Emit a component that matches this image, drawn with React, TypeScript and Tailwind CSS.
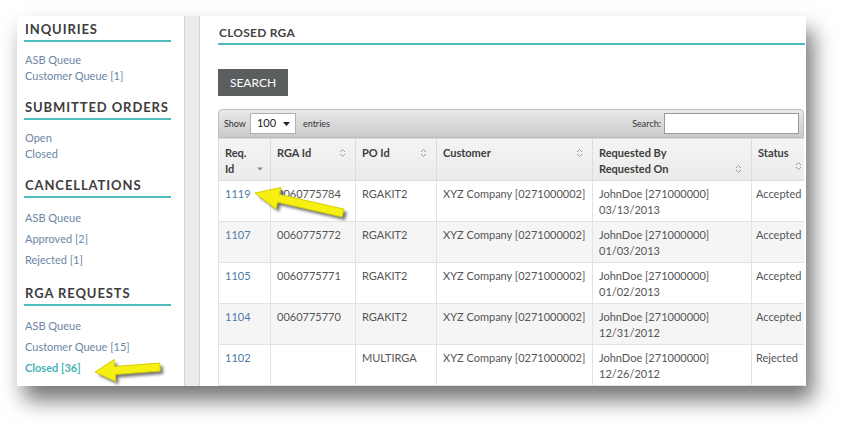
import React from 'react';

// Closed RGA list – screenshot of an admin page with callout arrows
const menu = [
  { title: 'INQUIRIES', gap: 'mt-[10px] gap-0', items: [{ label: 'ASB Queue' }, { label: 'Customer Queue [1]' }] },
  { title: 'SUBMITTED ORDERS', gap: 'mt-[10px] gap-0', items: [{ label: 'Open' }, { label: 'Closed' }] },
  {
    title: 'CANCELLATIONS',
    gap: 'mt-[12px] gap-[5px]',
    items: [{ label: 'ASB Queue' }, { label: 'Approved [2]' }, { label: 'Rejected [1]' }]
  },
  {
    title: 'RGA REQUESTS',
    gap: 'mt-[12px] gap-[5px]',
    items: [{ label: 'ASB Queue' }, { label: 'Customer Queue [15]' }, { label: 'Closed [36]', active: true }]
  }
];

const rows = [
  { id: '1119', rga: '0060775784', po: 'RGAKIT2', date: '03/13/2013', status: 'Accepted' },
  { id: '1107', rga: '0060775772', po: 'RGAKIT2', date: '01/03/2013', status: 'Accepted' },
  { id: '1105', rga: '0060775771', po: 'RGAKIT2', date: '01/02/2013', status: 'Accepted' },
  { id: '1104', rga: '0060775770', po: 'RGAKIT2', date: '12/31/2012', status: 'Accepted' },
  { id: '1102', rga: '', po: 'MULTIRGA', date: '12/26/2012', status: 'Rejected' }
];

const SortIcon = () => (
  <svg width="7" height="10" viewBox="0 0 7 10" className="shrink-0">
    <path d="M1 4 L3.5 1.5 L6 4 M1 6 L3.5 8.5 L6 6" fill="none" stroke="#9a9a9a" strokeWidth="1" />
  </svg>
);

const SortedIcon = () => (
  <svg width="8" height="6" viewBox="0 0 8 6" className="shrink-0">
    <path d="M1 1.5 L7 1.5 L4 4.5 Z" fill="#8a8a8a" />
  </svg>
);

const Sidebar = () => (
  <div className="w-[167px] shrink-0 bg-white pl-[7px] pr-[13px] pt-[5px]">
    {menu.map((section, i) => (
      <div key={section.title} className={i === 0 ? '' : i === 3 ? 'mt-[17px]' : 'mt-[15px]'}>
        <div className="border-b-2 border-[#4cbcbc] pb-[3px] pl-[1px] text-[13px] font-bold leading-[16px] tracking-[0.07em] text-[#3d3d3d]">
          {section.title}
        </div>
        <div className={`flex flex-col pl-[1px] ${section.gap}`}>
          {section.items.map(item => (
            <a
              key={item.label}
              className={
                item.active
                  ? 'text-[11px] font-bold leading-[16px] text-[#45b3b8]'
                  : 'text-[11px] leading-[16px] text-[#6d86a3]'
              }
            >
              {item.label}
            </a>
          ))}
        </div>
      </div>
    ))}
  </div>
);

const Main = () => (
  <div className="flex-1 bg-white pl-[18px] pr-[1px] pt-[9px]">
    <div className="border-b-2 border-[#4cbcbc] pb-[2px] pl-[1px] text-[12px] font-bold leading-[16px] tracking-[0.02em] text-[#444]">
      CLOSED RGA
    </div>
    <button className="mt-[24px] h-[27px] w-[70px] bg-[#5b5e5e] text-[12px] leading-[27px] text-white">
      SEARCH
    </button>

    <div className="mt-[13px] w-[586px] overflow-hidden">
      {/* toolbar */}
      <div className="flex h-[29px] items-center justify-between rounded-t-[4px] border border-[#bdbdbd] bg-gradient-to-b from-[#eaeaea] to-[#cacaca] pl-[5px] pr-[4px] text-[9px] text-[#333]">
        <div className="flex items-center gap-[4px]">
          <span>Show</span>
          <div className="flex h-[21px] w-[46px] items-center justify-between border border-[#b0b0b0] bg-white pl-[6px] pr-[5px] text-[11px] text-[#222]">
            <span>100</span>
            <svg width="7" height="4" viewBox="0 0 7 4">
              <path d="M0 0 L7 0 L3.5 4 Z" fill="#222" />
            </svg>
          </div>
          <span className="ml-[3px]">entries</span>
        </div>
        <div className="flex items-center gap-[3px]">
          <span>Search:</span>
          <div className="h-[21px] w-[135px] border border-[#9a9a9a] bg-white" />
        </div>
      </div>

      <table className="w-[620px] table-fixed border-collapse text-[11px] leading-[16px] text-[#555]">
        <colgroup>
          <col className="w-[52px]" />
          <col className="w-[85px]" />
          <col className="w-[81px]" />
          <col className="w-[156px]" />
          <col className="w-[159px]" />
          <col className="w-[87px]" />
        </colgroup>
        <thead>
          <tr className="h-[42px] bg-gradient-to-b from-[#f4f4f4] to-[#ebebeb] text-left align-top font-bold text-[#3d3d3d]">
            <th className="border border-[#dcdcdc] px-[6px] pt-[6px]">
              <div>Req.</div>
              <div className="flex items-center justify-between">
                <span>Id</span>
                <SortedIcon />
              </div>
            </th>
            {['RGA Id', 'PO Id', 'Customer'].map(h => (
              <th key={h} className="border border-[#dcdcdc] px-[6px] pt-[6px]">
                <div className="flex items-center justify-between pr-[3px]">
                  <span>{h}</span>
                  <SortIcon />
                </div>
              </th>
            ))}
            <th className="border border-[#dcdcdc] px-[6px] pt-[6px]">
              <div>Requested By</div>
              <div className="flex items-center justify-between pr-[3px]">
                <span>Requested On</span>
                <SortIcon />
              </div>
            </th>
            <th className="border border-[#dcdcdc] px-[6px] pt-[6px]">
              <div>Status</div>
              <div className="flex w-[44px] justify-end">
                <SortIcon />
              </div>
            </th>
          </tr>
        </thead>
        <tbody>
          {rows.map((r, i) => (
            <tr key={r.id} className={`h-[41px] align-top ${i % 2 === 1 ? 'bg-[#f5f5f5]' : 'bg-white'}`}>
              <td className="border border-[#e2e2e2] px-[6px] pt-[5px] text-[#4f79a6]">{r.id}</td>
              <td className="border border-[#e2e2e2] px-[6px] pt-[5px]">{r.rga}</td>
              <td className="border border-[#e2e2e2] px-[6px] pt-[5px]">{r.po}</td>
              <td className="border border-[#e2e2e2] px-[6px] pt-[5px]">XYZ Company [0271000002]</td>
              <td className="border border-[#e2e2e2] px-[6px] pt-[5px]">
                <div>JohnDoe [271000000]</div>
                <div>{r.date}</div>
              </td>
              <td className="border border-[#e2e2e2] px-[4px] pt-[5px]">{r.status}</td>
            </tr>
          ))}
        </tbody>
      </table>
    </div>
  </div>
);

const Arrows = () => (
  <svg className="pointer-events-none absolute inset-0" width="850" height="428" viewBox="0 0 850 428">
    <defs>
      <filter id="blur" x="-20%" y="-20%" width="140%" height="140%">
        <feGaussianBlur stdDeviation="1.5" />
      </filter>
    </defs>
    <g transform="translate(3 3)" filter="url(#blur)" fill="rgba(0,0,0,0.55)">
      <polygon points="255,193 280.8,187.6 279.3,194.4 343.9,209.1 342.1,216.9 277.5,202.2 276,209" />
      <polygon points="95,372 114.1,359.5 114.6,366.5 159.7,363 160.3,371 115.2,374.5 115.7,381.5" />
    </g>
    <g fill="#f6ef12" stroke="#d8cf00" strokeWidth="1" strokeLinejoin="round">
      <polygon points="255,193 280.8,187.6 279.3,194.4 343.9,209.1 342.1,216.9 277.5,202.2 276,209" />
      <polygon points="95,372 114.1,359.5 114.6,366.5 159.7,363 160.3,371 115.2,374.5 115.7,381.5" />
    </g>
  </svg>
);

export default function App() {
  return (
    <div
      className="relative h-[428px] w-[850px] overflow-hidden bg-white pl-[17px] pt-[16px]"
      style={{ fontFamily: 'Lato, "Open Sans", sans-serif' }}
    >
      <div className="flex h-[370px] w-[789px] overflow-hidden shadow-[7px_14px_20px_rgba(0,0,0,0.55)]">
        <Sidebar />
        <div className="w-[16px] shrink-0 border-x border-[#d4d2ce] bg-[#edebe7]" />
        <Main />
      </div>
      <Arrows />
    </div>
  );
}
